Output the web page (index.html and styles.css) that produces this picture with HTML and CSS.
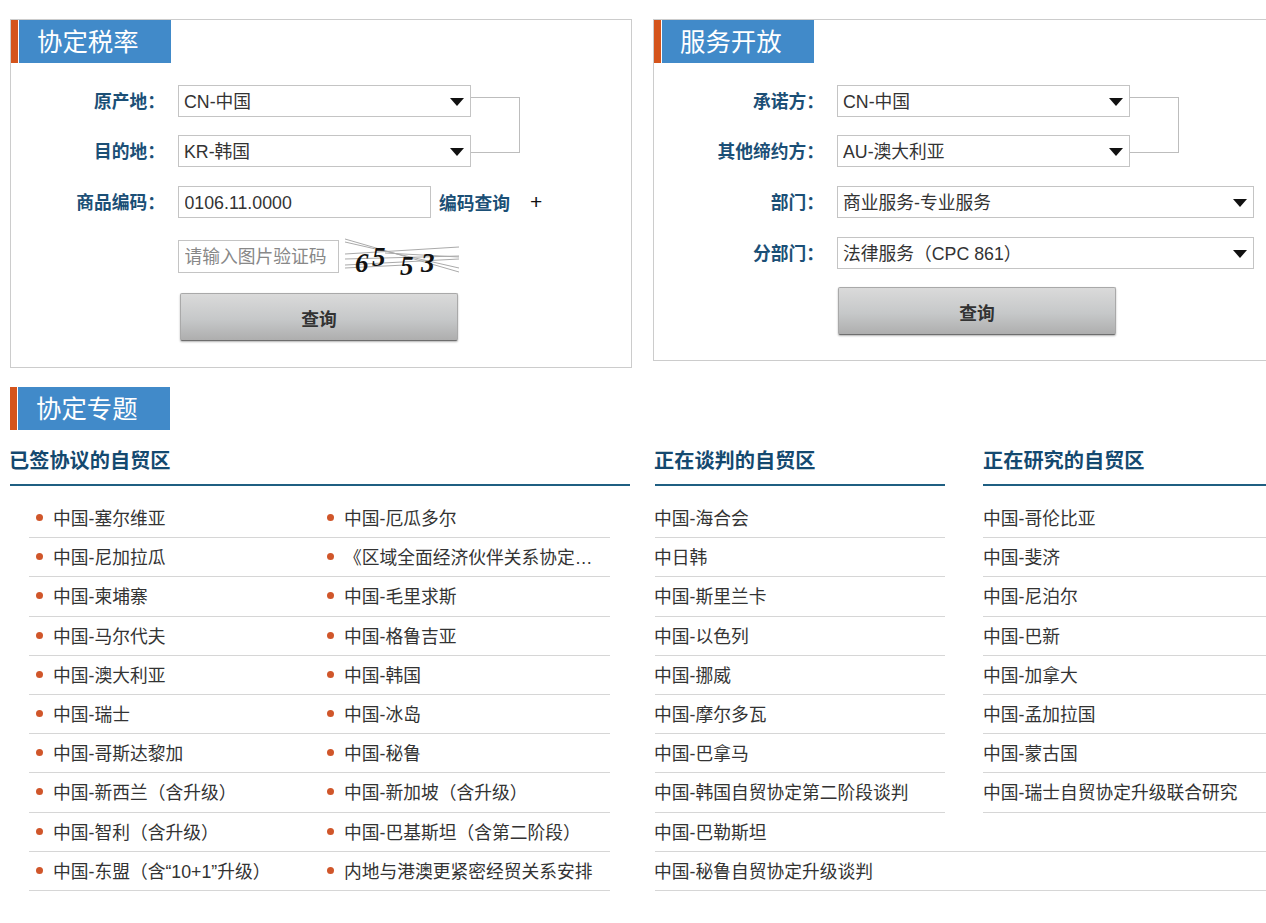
FILE: index.html
```html
<!DOCTYPE html>
<html lang="zh-CN">
<head>
<meta charset="utf-8">
<title>协定税率</title>
<link rel="stylesheet" href="styles.css">
</head>
<body>
<div class="page">
  <div class="top">
    <section class="panel panel-tariff">
      <h2 class="tab">协定税率</h2>
      <form class="form">
        <div class="pair">
          <div class="row"><label class="label">原产地：</label><span class="sel"><select><option>CN-中国</option></select></span></div>
          <div class="row"><label class="label">目的地：</label><span class="sel"><select><option>KR-韩国</option></select></span></div>
          <i class="bracket"></i>
        </div>
        <div class="row"><label class="label">商品编码：</label><input class="code" type="text" value="0106.11.0000"><a class="lookup">编码查询</a><span class="plus">+</span></div>
        <div class="row row-captcha"><span class="label"></span><input class="captcha-input" type="text" placeholder="请输入图片验证码">
          <svg class="captcha" width="114" height="46" viewBox="0 0 114 46">
            <g class="noise" transform="translate(0 5)">
              <path d="M0 0L114 33"/><path d="M0 3L114 29"/><path d="M0 15L114 8"/><path d="M0 20L114 17"/><path d="M0 26L114 20"/><path d="M40 14L114 18"/><path d="M0 29L60 26"/>
            </g>
            <g class="digits">
              <text x="10" y="38">6</text>
              <text x="27" y="32">5</text>
              <text x="55" y="41">5</text>
              <text x="76" y="38">3</text>
            </g>
          </svg>
        </div>
        <button class="btn btn-tariff" type="button">查询</button>
      </form>
    </section>
    <section class="panel panel-service">
      <h2 class="tab">服务开放</h2>
      <form class="form">
        <div class="pair">
          <div class="row"><label class="label">承诺方：</label><span class="sel"><select><option>CN-中国</option></select></span></div>
          <div class="row"><label class="label">其他缔约方：</label><span class="sel"><select><option>AU-澳大利亚</option></select></span></div>
          <i class="bracket"></i>
        </div>
        <div class="row"><label class="label">部门：</label><span class="sel sel-wide"><select><option>商业服务-专业服务</option></select></span></div>
        <div class="row"><label class="label">分部门：</label><span class="sel sel-wide"><select><option>法律服务（CPC 861）</option></select></span></div>
        <button class="btn btn-service" type="button">查询</button>
      </form>
    </section>
  </div>

  <h2 class="tab tab-topics">协定专题</h2>
  <div class="topics">
    <div class="signed">
      <h3 class="head">已签协议的自贸区</h3>
      <ul class="list list-signed">
        <li>中国-塞尔维亚</li><li>中国-厄瓜多尔</li>
        <li>中国-尼加拉瓜</li><li>《区域全面经济伙伴关系协定…</li>
        <li>中国-柬埔寨</li><li>中国-毛里求斯</li>
        <li>中国-马尔代夫</li><li>中国-格鲁吉亚</li>
        <li>中国-澳大利亚</li><li>中国-韩国</li>
        <li>中国-瑞士</li><li>中国-冰岛</li>
        <li>中国-哥斯达黎加</li><li>中国-秘鲁</li>
        <li>中国-新西兰（含升级）</li><li>中国-新加坡（含升级）</li>
        <li>中国-智利（含升级）</li><li>中国-巴基斯坦（含第二阶段）</li>
        <li>中国-东盟（含“10+1”升级）</li><li>内地与港澳更紧密经贸关系安排</li>
      </ul>
    </div>
    <div class="others">
      <div class="other-cols">
        <div>
          <h3 class="head">正在谈判的自贸区</h3>
          <ul class="list">
            <li>中国-海合会</li><li>中日韩</li><li>中国-斯里兰卡</li><li>中国-以色列</li>
            <li>中国-挪威</li><li>中国-摩尔多瓦</li><li>中国-巴拿马</li><li>中国-韩国自贸协定第二阶段谈判</li>
          </ul>
        </div>
        <div class="study">
          <h3 class="head">正在研究的自贸区</h3>
          <ul class="list">
            <li>中国-哥伦比亚</li><li>中国-斐济</li><li>中国-尼泊尔</li><li>中国-巴新</li>
            <li>中国-加拿大</li><li>中国-孟加拉国</li><li>中国-蒙古国</li><li>中国-瑞士自贸协定升级联合研究</li>
          </ul>
        </div>
      </div>
      <ul class="list list-wide">
        <li>中国-巴勒斯坦</li><li>中国-秘鲁自贸协定升级谈判</li>
      </ul>
    </div>
  </div>
</div>
</body>
</html>
```
FILE: styles.css
```css
* { box-sizing: border-box; }
html, body { margin: 0; padding: 0; background: #fff; }
body {
  font-family: "Liberation Sans", "Noto Sans CJK SC", sans-serif;
  font-size: 17.75px;
  color: #333;
  overflow: hidden;
}
.page { width: 1266px; height: 923px; overflow: hidden; padding-left: 10px; }

.top { display: flex; align-items: flex-start; padding-top: 19px; gap: 21px; margin-bottom: 19px; }
.panel { border: 1px solid #ccc; background: #fff; }
.panel-tariff { width: 622px; height: 349px; }
.panel-service { width: 613px; height: 342px; border-right: 0; }

.tab {
  margin: 0;
  width: 160px;
  height: 43px;
  padding: 0 0 4px 26px;
  display: flex;
  align-items: center;
  font-size: 25.4px;
  font-weight: 400;
  color: #fff;
  background: linear-gradient(to right, #d4541c 7px, #fff 7px, #fff 8px, #418ac9 8px);
}

.form { display: flex; flex-direction: column; gap: 19px; padding-top: 22px; }
.pair { position: relative; display: flex; flex-direction: column; gap: 18px; }
.row { display: flex; align-items: center; height: 32px; }
.label { width: 154px; margin-right: 13px; padding-bottom: 2px; text-align: right; font-weight: 700; color: #1b4f76; white-space: nowrap; }
.panel-service .label { width: 170px; }

.sel { position: relative; display: block; width: 293px; height: 32px; }
.sel-wide { width: 417px; }
.sel select {
  appearance: none;
  -webkit-appearance: none;
  width: 100%;
  height: 100%;
  padding: 2px 5px 0;
  border: 1px solid #c4c4c4;
  border-radius: 0;
  background: #fff;
  font: inherit;
  color: #333;
}
.sel::after {
  content: "";
  position: absolute;
  right: 7px;
  top: 13px;
  border-style: solid;
  border-width: 8px 7.5px 0;
  border-color: #111 transparent transparent;
}
.bracket {
  position: absolute;
  top: 12px;
  left: 460px;
  width: 49px;
  height: 56px;
  border: 1px solid #bdbdbd;
  border-left: 0;
}
.panel-service .bracket { left: 476px; }

input {
  height: 32px;
  border: 1px solid #c4c4c4;
  padding: 2px 5.5px 0;
  font: inherit;
  color: #333;
  border-radius: 0;
  background: #fff;
  outline: 0;
}
input::placeholder { color: #888; opacity: 1; }
.code { width: 253px; }
.lookup { margin-left: 8px; font-weight: 700; color: #1b4f76; }
.plus { margin-left: 20px; font-size: 21px; font-weight: 400; color: #111; }

.row-captcha { height: 33px; margin-top: 3px; }
.captcha-input { width: 161px; height: 33px; }
.captcha { margin-left: 6px; flex: none; overflow: visible; }
.noise { stroke: #aaa; stroke-width: 1; fill: none; }
.digits { font-family: "Liberation Serif", serif; font-size: 27px; font-weight: 700; font-style: italic; fill: #111; }

.btn {
  display: block;
  height: 48px;
  border: 1px solid #a9a9a9;
  border-bottom-color: #6e6e6e;
  border-radius: 2px;
  background: linear-gradient(#dadada, #c6c8c9 55%, #aeaeae);
  box-shadow: 0 1px 2px rgba(0, 0, 0, .3);
  font: 700 17.75px "Liberation Sans", "Noto Sans CJK SC", sans-serif;
  color: #333;
  padding: 2px 0 0;
}
.btn-tariff { width: 278px; margin: 1px 0 0 169px; }
.btn-service { width: 278px; margin: -1px 0 0 184px; }

.topics { display: flex; gap: 25px; }
.signed { width: 620px; flex: none; }
.others { width: 611px; flex: none; }
.other-cols { display: grid; grid-template-columns: 290px 283px; column-gap: 38px; }

.head {
  margin: 5px 0 13px;
  height: 51px;
  line-height: 52px;
  text-indent: -1px;
  font-size: 20.2px;
  font-weight: 700;
  color: #14496f;
  border-bottom: 2px solid #1f5f82;
}
.list { list-style: none; margin: 0; padding: 0; }
.list li {
  display: flex;
  align-items: center;
  height: 39.2px;
  padding-bottom: 2px;
  border-bottom: 1px solid #d6d6d6;
  white-space: nowrap;
  text-indent: -1px;
}
.study .head, .study .list li { text-indent: 0; }
.list-signed {
  display: grid;
  grid-template-columns: 291px 290px;
  margin: 0 20px 0 19px;
}
.list-signed li { padding-left: 7px; }
.list-signed li::before {
  content: "";
  flex: none;
  width: 7px;
  height: 7px;
  margin: 1px 11px 0 0;
  border-radius: 50%;
  background: #d0562a;
}
```
